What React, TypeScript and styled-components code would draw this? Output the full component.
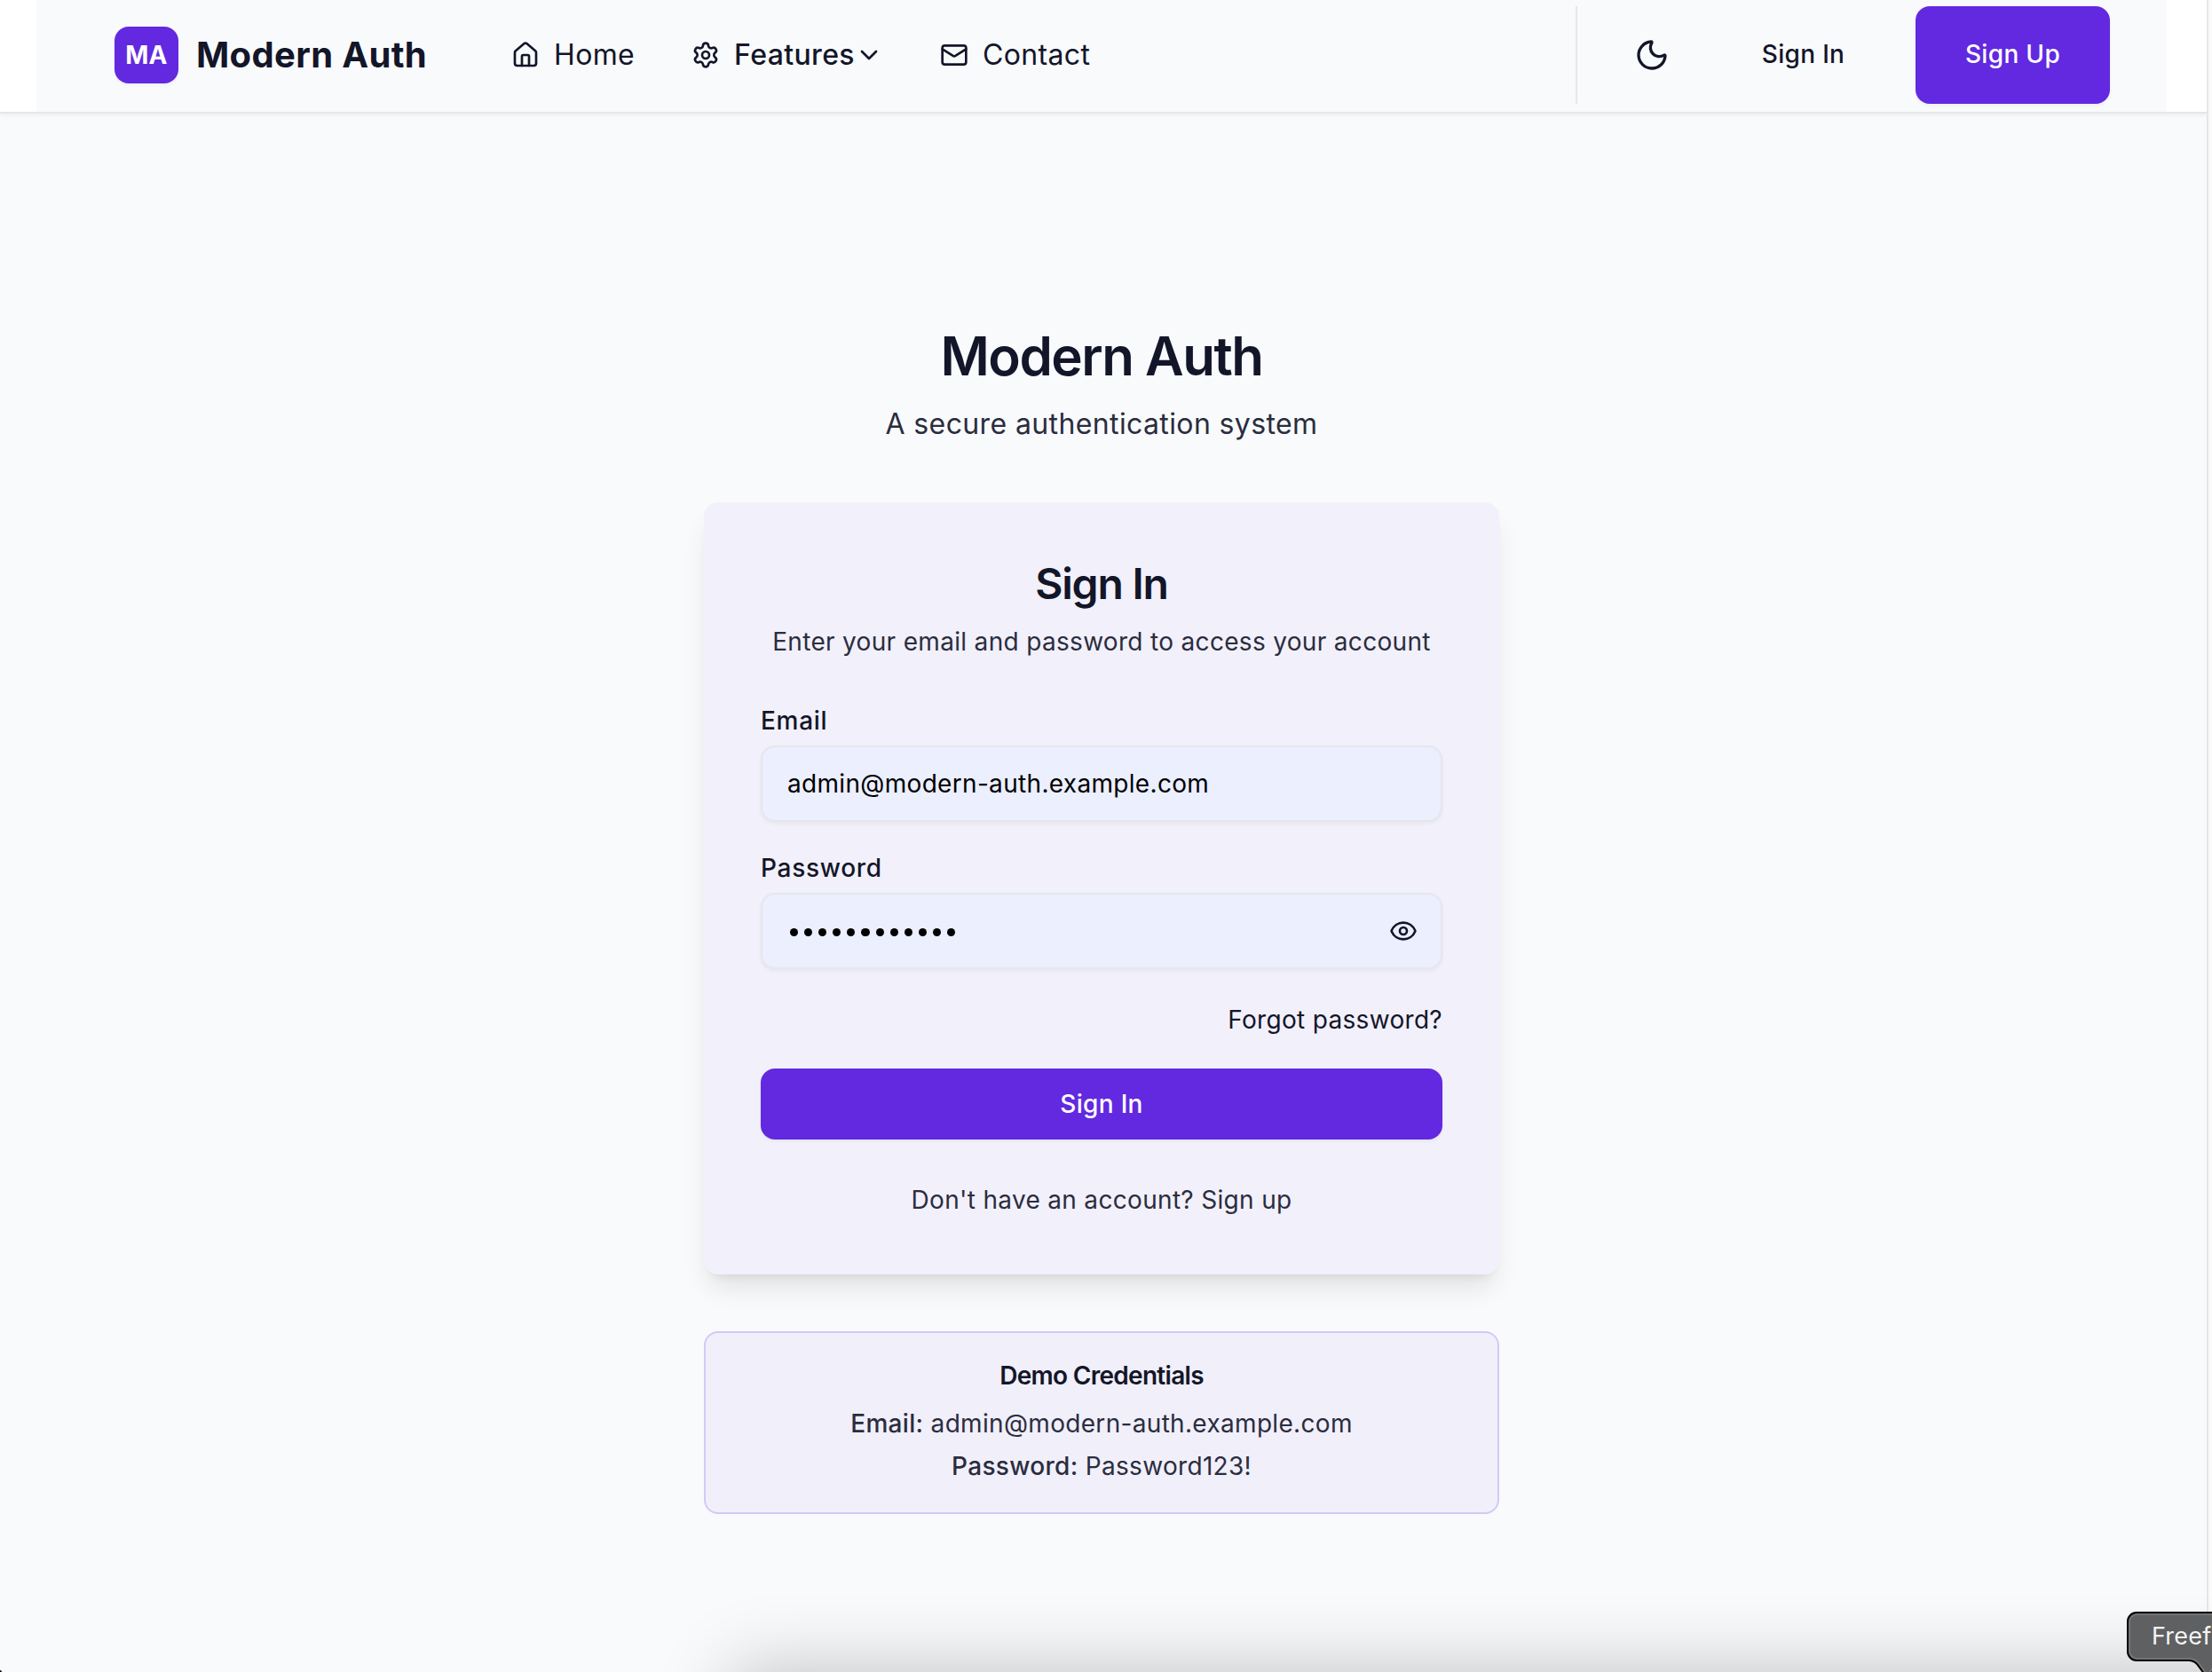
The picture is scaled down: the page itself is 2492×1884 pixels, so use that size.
import React from "react";
import styled, { createGlobalStyle } from "styled-components";
import { ChevronDown, Eye, House, Mail, Moon, Settings } from "lucide-react";

const INK = "#131629";
const MUTED = "#2a2d3e";
const VIOLET = "#6229e0";
const LINE = "#e5e7eb";

const GlobalStyle = createGlobalStyle`
  *, *::before, *::after { box-sizing: border-box; }
  html, body { margin: 0; padding: 0; overflow: hidden; }
  body {
    background: #f9fafc;
    color: ${INK};
    font-family: Inter, "Liberation Sans", sans-serif;
    font-size: 28px;
    -webkit-font-smoothing: antialiased;
  }
  button, input { font: inherit; letter-spacing: inherit; }
  h1, h2, h3, p { margin: 0; }
`;

const Screen = styled.div`
  position: relative;
  display: flex;
  width: 2492px;
  height: 1884px;
  overflow: hidden;
  letter-spacing: 0.32px;
`;

const Page = styled.div`
  flex: 1;
  display: flex;
  flex-direction: column;
`;

const Gutter = styled.div`
  width: 6px;
  background: #fafafa;
  border-left: 2px solid #e6e6e6;
`;

const Header = styled.header`
  height: 128px;
  padding-left: 41px;
  background: #fff;
  border-bottom: 2px solid ${LINE};
  box-shadow: 0 2px 4px rgba(0, 0, 0, 0.05);
`;

const HeaderInner = styled.div`
  display: flex;
  align-items: center;
  width: 2400px;
  height: 126px;
  padding: 0 64px 2px 88px;
  background: #f9fafc;
`;

const Brand = styled.a`
  display: flex;
  align-items: center;
  gap: 20px;
  width: 447px;
`;

const BrandMark = styled.span`
  display: flex;
  align-items: center;
  justify-content: center;
  width: 72px;
  height: 64px;
  border-radius: 16px;
  background: ${VIOLET};
  color: #fff;
  font-size: 28px;
  font-weight: 700;
  box-shadow: 0 2px 4px rgba(0, 0, 0, 0.05);
`;

const BrandName = styled.span`
  font-size: 40px;
  line-height: 56px;
  font-weight: 700;
  letter-spacing: 0.35px;
  white-space: nowrap;
`;

const Nav = styled.nav`
  display: flex;
  align-items: center;
  gap: 64px;
  flex: 1;
`;

const NavLink = styled.a<{ $strong?: boolean }>`
  display: flex;
  align-items: center;
  font-size: 32px;
  line-height: 48px;
  font-weight: ${(p) => (p.$strong ? 500 : 400)};
  letter-spacing: 0.36px;
  white-space: nowrap;

  svg:first-child { margin-right: 16px; }
`;

const Actions = styled.div`
  display: flex;
  align-items: center;
  gap: 24px;
  height: 110px;
  padding-left: 40px;
  border-left: 2px solid ${LINE};
`;

const HeaderButton = styled.button<{ $primary?: boolean; $width: number }>`
  display: flex;
  align-items: center;
  justify-content: center;
  width: ${(p) => p.$width}px;
  height: 110px;
  padding: 0;
  border: 0;
  border-radius: 16px;
  background: ${(p) => (p.$primary ? VIOLET : "transparent")};
  color: ${(p) => (p.$primary ? "#fff" : INK)};
  box-shadow: ${(p) => (p.$primary ? "0 2px 4px rgba(0, 0, 0, 0.05)" : "none")};
  font-weight: 500;
`;

const ButtonLabel = styled.span`
  padding-bottom: 2px;
`;

const Main = styled.main`
  display: flex;
  flex-direction: column;
  align-items: center;
  width: 2482px;
  padding-top: 237px;
`;

const Title = styled.h1`
  font-size: 60px;
  line-height: 72px;
  font-weight: 600;
  letter-spacing: -1.5px;
`;

const Subtitle = styled.p`
  margin-top: 17px;
  color: ${MUTED};
  font-size: 32px;
  line-height: 48px;
  letter-spacing: 0.38px;
`;

const Card = styled.section`
  display: flex;
  flex-direction: column;
  width: 896px;
  height: 870px;
  margin-top: 64px;
  padding: 64px;
  border-radius: 16px;
  background: #f2f0fb;
  box-shadow: 0 20px 30px -6px rgba(0, 0, 0, 0.1), 0 8px 12px -8px rgba(0, 0, 0, 0.1);
`;

const CardTitle = styled.h2`
  text-align: center;
  font-size: 48px;
  line-height: 56px;
  font-weight: 600;
  letter-spacing: -1.2px;
`;

const CardText = styled.p<{ $gap: number }>`
  margin-top: ${(p) => p.$gap}px;
  text-align: center;
  color: ${MUTED};
  line-height: 40px;
`;

const Field = styled.div<{ $gap: number }>`
  display: flex;
  flex-direction: column;
  gap: 14px;
  margin-top: ${(p) => p.$gap}px;
`;

const Label = styled.label`
  line-height: 28px;
  font-weight: 500;
  letter-spacing: 0.7px;
`;

const InputBox = styled.div`
  display: flex;
  align-items: center;
  justify-content: space-between;
  height: 86px;
  padding: 0 26px 0 28px;
  border: 2px solid ${LINE};
  border-radius: 16px;
  background: #ebeffe;
  color: #000;
  box-shadow: 0 2px 4px rgba(0, 0, 0, 0.05);

  svg { color: ${INK}; }
`;

const Dots = styled.span`
  display: flex;
  gap: 7px;
  padding: 3px 0 0 3px;
`;

const Dot = styled.i`
  width: 9.1px;
  height: 9.1px;
  border-radius: 50%;
  background: #000;
`;

const Forgot = styled.a`
  align-self: flex-end;
  margin-top: 37px;
  line-height: 40px;
`;

const Submit = styled.button`
  height: 80px;
  margin-top: 35px;
  border: 0;
  border-radius: 16px;
  background: ${VIOLET};
  color: #fff;
  font-weight: 500;
  box-shadow: 0 2px 4px rgba(0, 0, 0, 0.05);
`;

const Demo = styled.section`
  width: 896px;
  height: 206px;
  margin-top: 64px;
  padding-top: 28px;
  border: 2px solid #d5c8f6;
  border-radius: 16px;
  background: #f1effa;
  text-align: center;
`;

const DemoTitle = styled.h3`
  margin-bottom: 10px;
  font-size: 28px;
  line-height: 40px;
  font-weight: 600;
  letter-spacing: -0.7px;
`;

const DemoRow = styled.p`
  color: ${MUTED};
  line-height: 48px;

  strong { font-weight: 500; }
`;

const DockShadow = styled.div`
  position: absolute;
  left: 825px;
  top: 1884px;
  width: 2400px;
  height: 300px;
  box-shadow: 0 0 80px rgba(0, 0, 0, 0.24);
`;

const CornerMark = styled.div`
  position: absolute;
  left: 0;
  bottom: 0;
  width: 2px;
  height: 2px;
  background: #000;
  border-top-right-radius: 2px;
`;

const DockLabel = styled.div`
  position: absolute;
  left: 2396px;
  top: 1816px;
  width: 96px;
  height: 68px;
  overflow: hidden;

  svg { display: block; }
`;

const DockLabelText = styled.span`
  position: absolute;
  left: 28px;
  top: 10px;
  color: #f4f4f4;
  font-size: 27px;
  line-height: 36px;
  letter-spacing: 0.2px;
  white-space: nowrap;
`;

const BUBBLE =
  "M11 1H200V55H110C106 55 104 57 102 60L94 71Q91 74 88 71L79 59C76 56 74 55 70 55H11A10 10 0 0 1 1 45V11A10 10 0 0 1 11 1Z";
const BUBBLE_INNER =
  "M12 3H200V53H110C105 53 102 56 100 59L93 69Q91 71 89 69L81 58C78 54 75 53 70 53H12A9 9 0 0 1 3 44V12A9 9 0 0 1 12 3Z";

export default function App() {
  return (
    <Screen>
      <GlobalStyle />
      <Page>
        <Header>
          <HeaderInner>
            <Brand>
              <BrandMark>MA</BrandMark>
              <BrandName>Modern Auth</BrandName>
            </Brand>
            <Nav>
              <NavLink>
                <House size={32} />
                Home
              </NavLink>
              <NavLink $strong>
                <Settings size={32} />
                Features
                <ChevronDown size={32} />
              </NavLink>
              <NavLink>
                <Mail size={32} />
                Contact
              </NavLink>
            </Nav>
            <Actions>
              <HeaderButton $width={88} aria-label="Toggle theme">
                <Moon size={40} />
              </HeaderButton>
              <HeaderButton $width={205}>
                <ButtonLabel>Sign In</ButtonLabel>
              </HeaderButton>
              <HeaderButton $width={219} $primary>
                <ButtonLabel>Sign Up</ButtonLabel>
              </HeaderButton>
            </Actions>
          </HeaderInner>
        </Header>
        <Main>
          <Title>Modern Auth</Title>
          <Subtitle>A secure authentication system</Subtitle>
          <Card>
            <CardTitle>Sign In</CardTitle>
            <CardText $gap={17}>Enter your email and password to access your account</CardText>
            <Field $gap={55}>
              <Label>Email</Label>
              <InputBox>admin@modern-auth.example.com</InputBox>
            </Field>
            <Field $gap={38}>
              <Label>Password</Label>
              <InputBox>
                <Dots>
                  {Array.from({ length: 12 }, (_, i) => (
                    <Dot key={i} />
                  ))}
                </Dots>
                <Eye size={32} />
              </InputBox>
            </Field>
            <Forgot>Forgot password?</Forgot>
            <Submit>Sign In</Submit>
            <CardText $gap={48}>Don't have an account? Sign up</CardText>
          </Card>
          <Demo>
            <DemoTitle>Demo Credentials</DemoTitle>
            <DemoRow>
              <strong>Email:</strong> admin@modern-auth.example.com
            </DemoRow>
            <DemoRow>
              <strong>Password:</strong> Password123!
            </DemoRow>
          </Demo>
        </Main>
      </Page>
      <Gutter />
      <DockShadow />
      <CornerMark />
      <DockLabel>
        <svg width="96" height="68" viewBox="0 0 96 68">
          <path d={BUBBLE} fill="#5f6062" stroke="#000" strokeWidth="2" />
          <path d={BUBBLE_INNER} fill="none" stroke="#79797b" strokeWidth="1.6" />
        </svg>
        <DockLabelText>Freef</DockLabelText>
      </DockLabel>
    </Screen>
  );
}
